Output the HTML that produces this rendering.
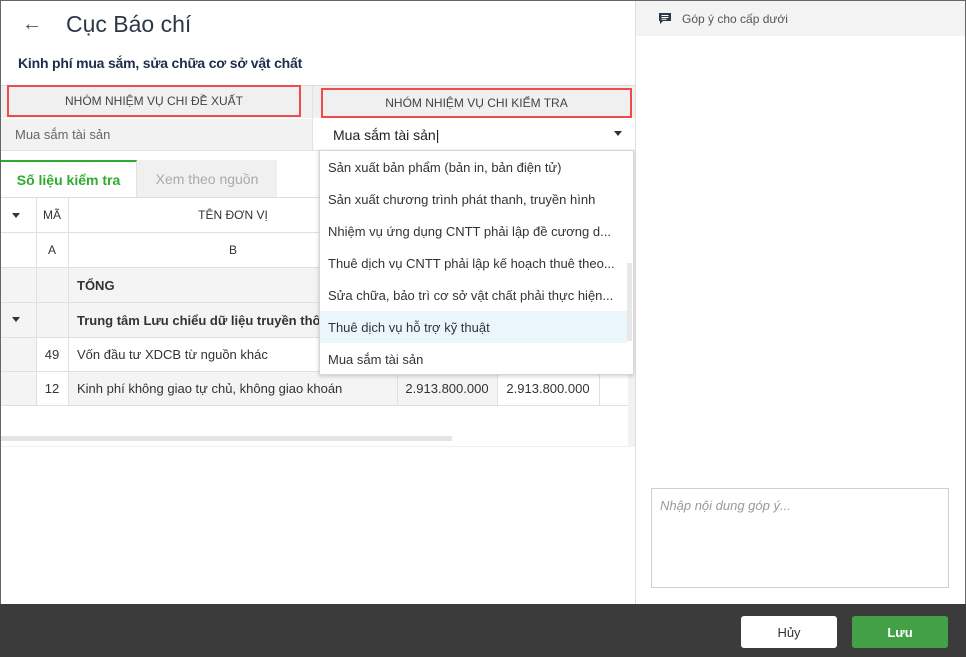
<!DOCTYPE html><html><head><meta charset="utf-8"><style>
*{box-sizing:border-box;margin:0;padding:0}
body{width:966px;height:657px;position:relative;overflow:hidden;background:#fff;font-family:"Liberation Sans",sans-serif;color:#333;font-size:13px}
.a{position:absolute}
.c{display:flex;align-items:center;justify-content:center}
.l{display:flex;align-items:center}
</style></head><body>
<div class="a" style="left:0;top:0;width:966px;height:657px;border:1px solid #666;border-bottom:none"></div>
<div class="a" style="left:22px;top:13px;font-size:20px;color:#555">&#8592;</div>
<div class="a" style="left:66px;top:11px;font-size:23px;color:#2d3748">Cục Báo chí</div>
<div class="a" style="left:18px;top:55px;font-size:14px;color:#1f2d4a;font-weight:bold;letter-spacing:-0.2px">Kinh phí mua sắm, sửa chữa cơ sở vật chất</div>
<div class="a" style="left:1px;top:85px;width:634px;height:33px;background:#f0f0f0;border-top:1px solid #ddd"></div>
<div class="a c" style="left:7px;top:85px;width:294px;height:32px;border:2px solid #f04a4a;font-size:12px;color:#444">NHÓM NHIỆM VỤ CHI ĐỀ XUẤT</div>
<div class="a" style="left:312px;top:86px;width:1px;height:64px;background:#e2e2e2"></div>
<div class="a c" style="left:321px;top:88px;width:311px;height:30px;border:2px solid #f04a4a;font-size:12px;color:#444">NHÓM NHIỆM VỤ CHI KIỂM TRA</div>
<div class="a l" style="left:1px;top:119px;width:311px;height:31px;background:#f2f2f2;padding-left:14px;color:#666">Mua sắm tài sản</div>
<div class="a l" style="left:313px;top:119px;width:322px;height:31px;padding-left:20px;color:#222;font-size:14px">Mua sắm tài sản|</div>
<div class="a" style="left:614px;top:131px;border-left:4px solid transparent;border-right:4px solid transparent;border-top:5px solid #333"></div>
<div class="a" style="left:1px;top:150px;width:634px;height:1px;background:#e2e2e2"></div>
<div class="a c" style="left:1px;top:160px;width:136px;height:37px;border-top:2px solid #2eab2e;background:#fff;color:#2eab2e;font-size:14px;font-weight:bold;border-right:1px solid #e2e2e2">Số liệu kiểm tra</div>
<div class="a c" style="left:137px;top:160px;width:140px;height:37px;background:#f0f0f0;color:#aaa;font-size:14px">Xem theo nguồn</div>
<div class="a" style="left:1px;top:197px;width:627px;height:1px;background:#ddd"></div>
<!-- table -->
<div class="a" style="left:1px;top:198px;width:627px;height:208px;font-size:13px">
<div class="a" style="left:0;top:70px;width:627px;height:70px;background:#f4f4f4"></div>
<div class="a" style="left:67px;top:174px;width:429px;height:34px;background:#f4f4f4"></div>
<div class="a" style="left:0;top:174px;width:35px;height:34px;background:#f4f4f4"></div>
<div class="a" style="left:0;top:139px;width:35px;height:35px;background:#f4f4f4"></div>
<div class="a" style="left:0;top:34px;width:627px;height:1px;background:#e0e0e0"></div>
<div class="a" style="left:0;top:69px;width:627px;height:1px;background:#e0e0e0"></div>
<div class="a" style="left:0;top:104px;width:627px;height:1px;background:#e0e0e0"></div>
<div class="a" style="left:0;top:139px;width:627px;height:1px;background:#e0e0e0"></div>
<div class="a" style="left:0;top:173px;width:627px;height:1px;background:#e0e0e0"></div>
<div class="a" style="left:0;top:207px;width:627px;height:1px;background:#e0e0e0"></div>
<div class="a" style="left:35px;top:0;width:1px;height:208px;background:#e0e0e0"></div>
<div class="a" style="left:67px;top:0;width:1px;height:208px;background:#e0e0e0"></div>
<div class="a" style="left:396px;top:174px;width:1px;height:34px;background:#e0e0e0"></div>
<div class="a" style="left:496px;top:174px;width:1px;height:34px;background:#e0e0e0"></div>
<div class="a" style="left:598px;top:174px;width:1px;height:34px;background:#e0e0e0"></div>
<div class="a" style="left:11px;top:15px;border-left:4px solid transparent;border-right:4px solid transparent;border-top:5px solid #333"></div>
<div class="a" style="left:11px;top:119px;border-left:4px solid transparent;border-right:4px solid transparent;border-top:5px solid #333"></div>
<div class="a c" style="left:35px;top:0;width:32px;height:34px;font-size:12px">MÃ</div>
<div class="a c" style="left:67px;top:0;width:330px;height:34px;font-size:12px">TÊN ĐƠN VỊ</div>
<div class="a c" style="left:35px;top:35px;width:32px;height:34px;font-size:12px">A</div>
<div class="a c" style="left:67px;top:35px;width:330px;height:34px;font-size:12px">B</div>
<div class="a l" style="left:76px;top:70px;height:34px;font-weight:bold">TỔNG</div>
<div class="a l" style="left:76px;top:105px;height:34px;font-weight:bold">Trung tâm Lưu chiểu dữ liệu truyền thông</div>
<div class="a c" style="left:35px;top:140px;width:32px;height:33px">49</div>
<div class="a l" style="left:76px;top:140px;height:33px">Vốn đầu tư XDCB từ nguồn khác</div>
<div class="a c" style="left:35px;top:174px;width:32px;height:33px">12</div>
<div class="a l" style="left:76px;top:174px;height:33px">Kinh phí không giao tự chủ, không giao khoán</div>
<div class="a c" style="left:396px;top:174px;width:100px;height:33px">2.913.800.000</div>
<div class="a c" style="left:496px;top:174px;width:102px;height:33px">2.913.800.000</div>
</div>
<div class="a" style="left:1px;top:436px;width:451px;height:5px;background:#e4e4e4"></div>
<div class="a" style="left:628px;top:150px;width:7px;height:297px;background:#f2f2f2"></div>
<div class="a" style="left:1px;top:446px;width:634px;height:1px;background:#eee"></div>
<!-- dropdown -->
<div class="a" style="left:319px;top:150px;width:315px;height:225px;background:#fff;border:1px solid #d6d6d6;box-shadow:0 1px 4px rgba(0,0,0,.2);font-size:13px;color:#333">
<div class="a l" style="left:0;top:0;width:308px;height:32px;padding-left:8px">Sản xuất bản phẩm (bản in, bản điện tử)</div>
<div class="a l" style="left:0;top:32px;width:308px;height:32px;padding-left:8px">Sản xuất chương trình phát thanh, truyền hình</div>
<div class="a l" style="left:0;top:64px;width:308px;height:32px;padding-left:8px">Nhiệm vụ ứng dụng CNTT phải lập đề cương d...</div>
<div class="a l" style="left:0;top:96px;width:308px;height:32px;padding-left:8px">Thuê dịch vụ CNTT phải lập kế hoạch thuê theo...</div>
<div class="a l" style="left:0;top:128px;width:308px;height:32px;padding-left:8px">Sửa chữa, bảo trì cơ sở vật chất phải thực hiện...</div>
<div class="a l" style="left:0;top:160px;width:308px;height:32px;padding-left:8px;background:#ebf5fc">Thuê dịch vụ hỗ trợ kỹ thuật</div>
<div class="a l" style="left:0;top:192px;width:308px;height:32px;padding-left:8px">Mua sắm tài sản</div>
<div class="a" style="left:307px;top:112px;width:5px;height:78px;background:#e8e8e8"></div>
</div>
<!-- right panel -->
<div class="a" style="left:635px;top:1px;width:1px;height:603px;background:#ddd"></div>
<div class="a l" style="left:636px;top:1px;width:329px;height:35px;background:#f3f3f3;padding-left:22px;font-size:12px;color:#555">
<svg width="14" height="13" viewBox="0 0 14 13" style="margin-right:10px"><path d="M1 1h12v8H5l-3 3V9H1z" fill="#2d3a4a"/><path d="M3.5 3.5h7M3.5 5.5h7M3.5 7.3h5" stroke="#fff" stroke-width="1"/></svg>Góp ý cho cấp dưới</div>
<div class="a" style="left:651px;top:488px;width:298px;height:100px;border:1px solid #d0d0d0;padding:9px 8px;font-style:italic;color:#999;font-size:13px">Nhập nội dung góp ý...</div>
<!-- footer -->
<div class="a" style="left:0;top:604px;width:966px;height:53px;background:#3b3b3b"></div>
<div class="a c" style="left:741px;top:616px;width:96px;height:32px;background:#fff;border-radius:3px;color:#333;font-size:13px">Hủy</div>
<div class="a c" style="left:852px;top:616px;width:96px;height:32px;background:#43a047;border-radius:3px;color:#fff;font-size:13px;font-weight:bold">Lưu</div>
</body></html>
